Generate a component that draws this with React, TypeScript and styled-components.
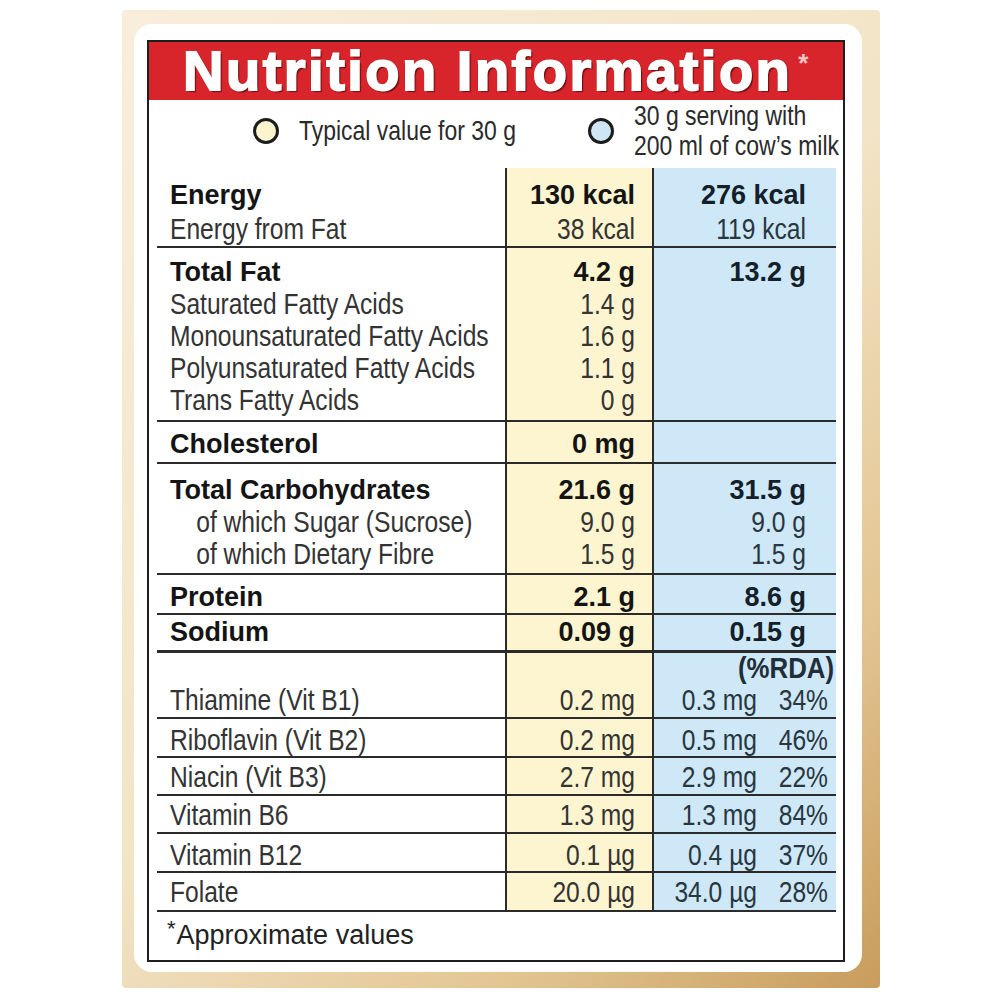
import React from 'react';
import styled, { createGlobalStyle } from 'styled-components';

const Global = createGlobalStyle`
  html, body { margin: 0; padding: 0; background: #fff; }
  body { font-family: "Liberation Sans", Arial, sans-serif; }
`;

const SANS = `"Liberation Sans", Arial, sans-serif`;
const LINE = '#2b2b2b';
const SQUEEZE = 0.82;

const Page = styled.div`
  padding: 10px 0 12px 122px;
`;

const Frame = styled.div`
  width: 758px;
  height: 978px;
  box-sizing: border-box;
  padding: 14px 18px 16px 12px;
  border-radius: 4px;
  background: linear-gradient(135deg, #f8eedb 0%, #f2e4c6 50%, #e3c592 78%, #c89c5c 100%);
  display: flex;
`;

const Card = styled.div`
  flex: 1;
  min-width: 0;
  background: #fff;
  border-radius: 18px;
  padding: 16px 17px 10px 13px;
  display: flex;
`;

const Box = styled.div`
  flex: 1;
  min-width: 0;
  border: 2px solid #1e1e1e;
  display: flex;
  flex-direction: column;
  overflow: hidden;
`;

const Header = styled.div`
  flex: none;
  height: 58px;
  background: #d8252c;
  display: flex;
  align-items: center;
  padding-left: 34px;
`;

const Title = styled.h1`
  margin: 0;
  font: bold 56px/1 ${SANS};
  color: #fff;
  letter-spacing: 2.5px;
  -webkit-text-stroke: 1.8px #fff;
  text-shadow: 1px 1px 0 #7a1414, -1px -1px 0 #9a1a1a, 1px -1px 0 #9a1a1a, -1px 1px 0 #9a1a1a, 2px 2px 1px #6a1010;
  white-space: nowrap;
`;

const Star = styled.sup`
  font-size: 26px;
  line-height: 0;
  color: #f7c4c4;
  -webkit-text-stroke: 0;
  text-shadow: none;
  vertical-align: 18px;
  margin-left: 6px;
`;

const Legend = styled.div`
  flex: none;
  height: 68px;
  box-sizing: border-box;
  display: grid;
  grid-template-columns: 335px minmax(0, 1fr);
  align-items: center;
  padding: 0 0 6px 104px;
`;

const LegendItem = styled.div`
  display: flex;
  align-items: center;
  gap: 20px;
  min-width: 0;
`;

const Dot = styled.span<{ $fill: string }>`
  width: 26px;
  height: 26px;
  box-sizing: border-box;
  border-radius: 50%;
  border: 3px solid #1c1c1c;
  background: ${(p) => p.$fill};
  flex: none;
`;

const LegendText = styled.div`
  font: 28px/30px ${SANS};
  color: #2a2a2a;
  white-space: nowrap;
  transform: scaleX(${SQUEEZE});
  transform-origin: left center;
`;

const Grid = styled.div`
  flex: none;
  margin: 0 7px 0 8px;
  display: flex;
  flex-direction: column;
`;

const Row = styled.div<{ $pt: number; $pb: number; $line: number; $h?: number }>`
  display: grid;
  grid-template-columns: 348px 147px 184px;
  border-bottom: ${(p) => p.$line}px solid ${LINE};
  ${(p) => (p.$h ? `height: ${p.$h}px;` : '')}
  & > div {
    padding-top: ${(p) => p.$pt}px;
    padding-bottom: ${(p) => p.$pb}px;
    min-width: 0;
  }
`;

const LabelCell = styled.div`
  padding-left: 13px;
`;

const YellowCell = styled.div`
  background: #fdf5d0;
  border-left: 2px solid ${LINE};
  padding-right: 17px;
  text-align: right;
`;

const BlueCell = styled.div<{ $split?: boolean }>`
  background: #cfe8f7;
  border-left: 2px solid ${LINE};
  text-align: right;
  padding-right: ${(p) => (p.$split ? 8 : 30)}px;
`;

const Text = styled.div<{ $bold?: boolean; $indent?: boolean; $lh: number; $right?: boolean; $blue?: boolean }>`
  font: ${(p) => (p.$bold ? `bold 27px/${p.$lh}px ${SANS}` : `30px/${p.$lh}px ${SANS}`)};
  color: ${(p) => (p.$bold ? (p.$blue ? '#13202a' : '#141414') : p.$blue ? '#27363f' : '#333')};
  padding-left: ${(p) => (p.$indent ? 32 : 0)}px;
  white-space: nowrap;
  transform: ${(p) => (p.$bold ? 'none' : `scaleX(${SQUEEZE})`)};
  transform-origin: ${(p) => (p.$right ? 'right' : 'left')} center;
`;

const RdaHead = styled.div`
  font: bold 30px/30px ${SANS};
  color: #1f2e38;
  margin-right: -6px;
  white-space: nowrap;
  transform: scaleX(0.86);
  transform-origin: right center;
`;

const Split = styled.div`
  display: grid;
  grid-template-columns: 103px 71px;
`;

const SplitValue = styled.span`
  display: block;
  text-align: right;
  font: 30px/32px ${SANS};
  color: #27363f;
  white-space: nowrap;
  transform: scaleX(${SQUEEZE});
  transform-origin: right center;
`;

const Foot = styled.div`
  flex: 1;
  min-height: 0;
  padding: 8px 0 0 18px;
  font: 27px/30px ${SANS};
  color: #222;
  white-space: nowrap;
`;

const FootStar = styled.span`
  font-size: 22px;
  line-height: 0;
  vertical-align: 8px;
  margin-right: 1px;
`;

type Line = { label: string; bold?: boolean; indent?: boolean; y?: string; b?: string };
type Section = { lines: Line[]; pt: number; pb: number; line: number; lh?: number };

const sections: Section[] = [
  {
    lines: [
      { label: 'Energy', bold: true, y: '130 kcal', b: '276 kcal' },
      { label: 'Energy from Fat', y: '38 kcal', b: '119 kcal' },
    ],
    pt: 10, pb: 0, line: 2, lh: 34,
  },
  {
    lines: [
      { label: 'Total Fat', bold: true, y: '4.2 g', b: '13.2 g' },
      { label: 'Saturated Fatty Acids', y: '1.4 g' },
      { label: 'Monounsaturated Fatty Acids', y: '1.6 g' },
      { label: 'Polyunsaturated Fatty Acids', y: '1.1 g' },
      { label: 'Trans Fatty Acids', y: '0 g' },
    ],
    pt: 8, pb: 4, line: 2,
  },
  { lines: [{ label: 'Cholesterol', bold: true, y: '0 mg' }], pt: 6, pb: 2, line: 2 },
  {
    lines: [
      { label: 'Total Carbohydrates', bold: true, y: '21.6 g', b: '31.5 g' },
      { label: 'of which Sugar (Sucrose)', indent: true, y: '9.0 g', b: '9.0 g' },
      { label: 'of which Dietary Fibre', indent: true, y: '1.5 g', b: '1.5 g' },
    ],
    pt: 10, pb: 3, line: 2,
  },
  { lines: [{ label: 'Protein', bold: true, y: '2.1 g', b: '8.6 g' }], pt: 6, pb: 0, line: 2 },
  { lines: [{ label: 'Sodium', bold: true, y: '0.09 g', b: '0.15 g' }], pt: 1, pb: 2, line: 3 },
];

type Vit = { label: string; y: string; b: string; pct: string; pt: number; h: number };
const vitamins: Vit[] = [
  { label: 'Thiamine (Vit B1)', y: '0.2 mg', b: '0.3 mg', pct: '34%', pt: 1, h: 34 },
  { label: 'Riboflavin (Vit B2)', y: '0.2 mg', b: '0.5 mg', pct: '46%', pt: 5, h: 37 },
  { label: 'Niacin (Vit B3)', y: '2.7 mg', b: '2.9 mg', pct: '22%', pt: 3, h: 36 },
  { label: 'Vitamin B6', y: '1.3 mg', b: '1.3 mg', pct: '84%', pt: 3, h: 36 },
  { label: 'Vitamin B12', y: '0.1 µg', b: '0.4 µg', pct: '37%', pt: 5, h: 37 },
  { label: 'Folate', y: '20.0 µg', b: '34.0 µg', pct: '28%', pt: 3, h: 37 },
];

export default function App() {
  return (
    <>
      <Global />
      <Page>
        <Frame>
          <Card>
            <Box>
              <Header>
                <Title>
                  Nutrition Information<Star>*</Star>
                </Title>
              </Header>
              <Legend>
                <LegendItem>
                  <Dot $fill="#fbf4cd" />
                  <LegendText>Typical value for 30 g</LegendText>
                </LegendItem>
                <LegendItem>
                  <Dot $fill="#cfe7f5" />
                  <LegendText>
                    30 g serving with
                    <br />
                    200 ml of cow’s milk
                  </LegendText>
                </LegendItem>
              </Legend>
              <Grid>
                {sections.map((s, i) => {
                  const lh = s.lh ?? 32;
                  return (
                    <Row key={i} $pt={s.pt} $pb={s.pb} $line={s.line}>
                      <LabelCell>
                        {s.lines.map((l, j) => (
                          <Text key={j} $bold={l.bold} $indent={l.indent} $lh={lh}>
                            {l.label}
                          </Text>
                        ))}
                      </LabelCell>
                      <YellowCell>
                        {s.lines.map((l, j) => (
                          <Text key={j} $bold={l.bold} $lh={lh} $right>
                            {l.y ?? '\u00a0'}
                          </Text>
                        ))}
                      </YellowCell>
                      <BlueCell>
                        {s.lines.map((l, j) => (
                          <Text key={j} $bold={l.bold} $lh={lh} $right $blue>
                            {l.b ?? '\u00a0'}
                          </Text>
                        ))}
                      </BlueCell>
                    </Row>
                  );
                })}
                <Row $pt={0} $pb={0} $line={0} $h={30}>
                  <LabelCell />
                  <YellowCell />
                  <BlueCell $split>
                    <RdaHead>(%RDA)</RdaHead>
                  </BlueCell>
                </Row>
                {vitamins.map((v) => (
                  <Row key={v.label} $pt={v.pt} $pb={0} $line={2} $h={v.h}>
                    <LabelCell>
                      <Text $lh={32}>{v.label}</Text>
                    </LabelCell>
                    <YellowCell>
                      <Text $lh={32} $right>{v.y}</Text>
                    </YellowCell>
                    <BlueCell $split>
                      <Split>
                        <SplitValue>{v.b}</SplitValue>
                        <SplitValue>{v.pct}</SplitValue>
                      </Split>
                    </BlueCell>
                  </Row>
                ))}
              </Grid>
              <Foot>
                <FootStar>*</FootStar>Approximate values
              </Foot>
            </Box>
          </Card>
        </Frame>
      </Page>
    </>
  );
}
